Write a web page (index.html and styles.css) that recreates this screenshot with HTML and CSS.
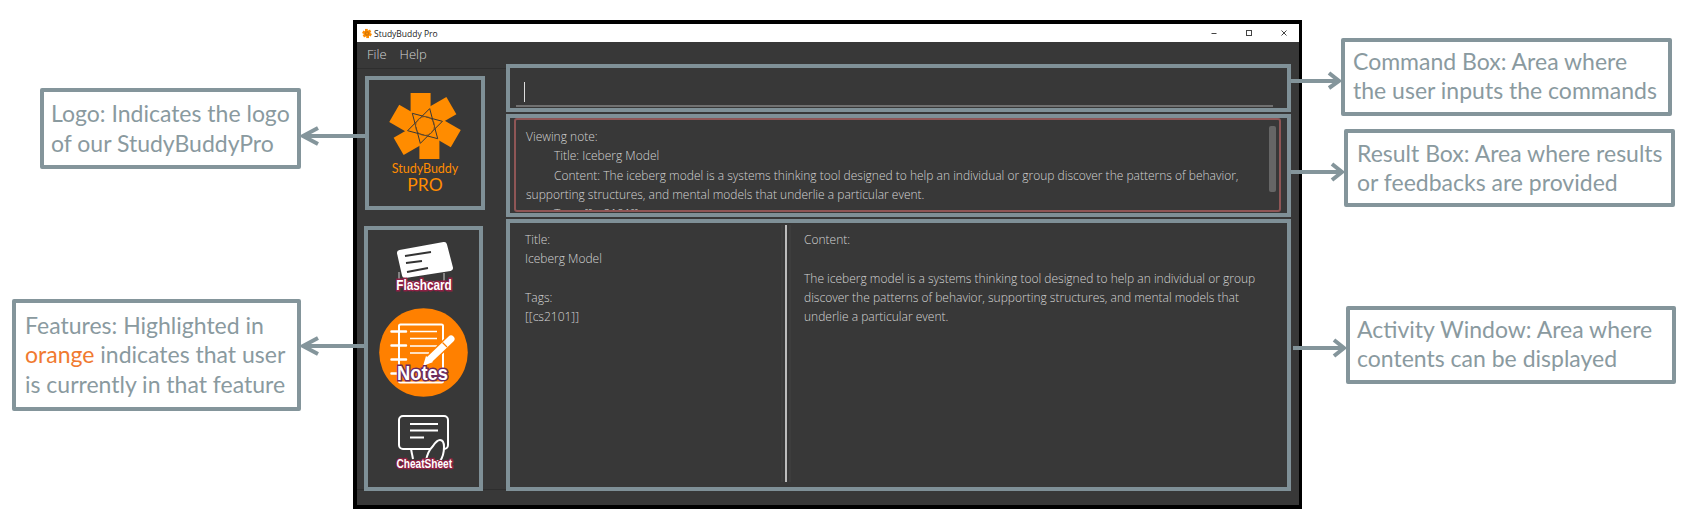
FILE: index.html
```html
<!DOCTYPE html>
<html lang="en">
<head>
<meta charset="utf-8">
<title>StudyBuddy Pro annotated</title>
<link rel="stylesheet" href="styles.css">
</head>
<body>
<svg class="defs" width="0" height="0" aria-hidden="true">
  <defs>
    <symbol id="logo" viewBox="-36 -36 72 72">
      <g fill="#ff8c00">
        <rect x="-14.4" y="-33" width="20" height="26"/>
        <rect x="-14.4" y="-33" width="20" height="26" transform="rotate(60)"/>
        <rect x="-14.4" y="-33" width="20" height="26" transform="rotate(120)"/>
        <rect x="-14.4" y="-33" width="20" height="26" transform="rotate(180)"/>
        <rect x="-14.4" y="-33" width="20" height="26" transform="rotate(240)"/>
        <rect x="-14.4" y="-33" width="20" height="26" transform="rotate(300)"/>
        <circle r="16"/>
      </g>
      <g fill="none" stroke="#383838" stroke-width="1">
        <path d="M4.7-17.4 L12.7 12.7 L-17.4 4.7 Z"/>
        <path d="M17.4-4.7 L-4.7 17.4 L-12.7-12.7 Z"/>
        <circle r="9.5" stroke-width=".8" stroke="#7a5020"/>
      </g>
      <path fill="#ff8c00" d="M0-9 L2-6 L6-7 L6-3 L9 0 L6 3 L6 7 L2 6 L0 9 L-2 6 L-6 7 L-6 3 L-9 0 L-6-3 L-6-7 L-2-6 Z"/>
    </symbol>
  </defs>
</svg>

<main class="window">
  <header class="titlebar">
    <svg class="title-icon"><use href="#logo"/></svg>
    <span class="title-text">StudyBuddy Pro</span>
    <div class="win-controls">
      <svg class="win-btn" viewBox="0 0 10 10"><path d="M2.5 5.5H7.5" stroke="#444" fill="none"/></svg>
      <svg class="win-btn" viewBox="0 0 10 10"><rect x="2.5" y="2.5" width="5" height="5" stroke="#444" fill="none"/></svg>
      <svg class="win-btn" viewBox="0 0 10 10"><path d="M2.5 2.5L7.5 7.5M7.5 2.5L2.5 7.5" stroke="#444" fill="none"/></svg>
    </div>
  </header>
  <nav class="menubar">
    <span class="menu-item">File</span>
    <span class="menu-item">Help</span>
  </nav>
  <div class="body">
    <aside class="sidebar">
      <section class="logo-box">
        <svg class="logo-mark"><use href="#logo"/></svg>
        <div class="logo-name">StudyBuddy</div>
        <div class="logo-pro">PRO</div>
      </section>
      <section class="nav-box">
        <div class="nav-item flash-item">
          <svg class="flash-icon" viewBox="0 0 60 52">
            <path d="M5 32V42H50V33" fill="none" stroke="#cfcfcf" stroke-width="1"/>
            <path d="M6 13 L50 5 L56 28 L11 35 Z" fill="#fff" stroke="#fff" stroke-width="6" stroke-linejoin="round"/>
            <path d="M11 16L37 12M12 23L28 21M13 32L34 28" stroke="#333" stroke-width="2" fill="none"/>
          </svg>
          <span class="nav-label flash-label">Flashcard</span>
        </div>
        <div class="nav-item notes-item">
          <svg class="notes-icon" viewBox="0 0 89 89">
            <circle cx="44.5" cy="44.5" r="44.3" fill="#ff8000"/>
            <rect x="20" y="16.5" width="44" height="58" rx="1.5" fill="none" stroke="#fff" stroke-width="2"/>
            <path d="M31 23.5H58M31 30.5H58M31 38H58M31 45H50" stroke="#fff" stroke-width="1.5" fill="none"/>
            <path d="M12.5 23.5H27M12.5 37.5H27M12.5 51.5H27M12.5 65.5H27" stroke="#fff" stroke-width="2.5" fill="none" stroke-linecap="round"/>
            <path d="M50 52L72 31" stroke="#ff8000" stroke-width="10" fill="none"/>
            <path d="M51 51L72 31" stroke="#fff" stroke-width="7" fill="none" stroke-linecap="round"/>
            <path d="M44 58L47 48L54 54Z" fill="#fff"/>
            <path d="M63.5 34.5L68 39" stroke="#ff8000" stroke-width="1.2" fill="none"/>
          </svg>
          <span class="nav-label notes-label">Notes</span>
        </div>
        <div class="nav-item cheat-item">
          <svg class="cheat-icon" viewBox="0 0 60 56">
            <rect x="5" y="1" width="49" height="33" rx="4" fill="none" stroke="#fff" stroke-width="2"/>
            <path d="M16 9H44M16 15.5H44M16 22.5H30" stroke="#fff" stroke-width="2" fill="none"/>
            <path d="M17 34L19 44" stroke="#fff" stroke-width="2" fill="none"/>
            <path d="M32 46C33 39 36 34 39 31C41 28 43 25 46 25C49 25 50 28 50 32C50 38 49 42 46 46Z" fill="#383838" stroke="#fff" stroke-width="2"/>
          </svg>
          <span class="nav-label cheat-label">CheatSheet</span>
        </div>
      </section>
    </aside>
    <div class="main">
      <section class="panel command">
        <div class="command-input"><span class="caret"></span></div>
      </section>
      <section class="panel result">
        <div class="result-inner">
          <p class="result-text">Viewing note:<br>
          <span class="tab"></span>Title: Iceberg Model<br>
          <span class="tab"></span>Content: The iceberg model is a systems thinking tool designed to help an individual or group discover the patterns of behavior,<br>
          supporting structures, and mental models that underlie a particular event.<br>
          <span class="tab"></span>Tags: [[cs2101]]</p>
          <div class="scrollbar"></div>
        </div>
      </section>
      <section class="panel activity">
        <div class="col col-left">Title:<br>Iceberg Model<br><br>Tags:<br>[[cs2101]]</div>
        <div class="splitter"></div>
        <div class="col col-right">Content:<br><br>The iceberg model is a systems thinking tool designed to help an individual or group<br>discover the patterns of behavior, supporting structures, and mental models that<br>underlie a particular event.</div>
      </section>
    </div>
  </div>
</main>

<div class="callout c-logo"><span>Logo: Indicates the logo</span><span>of our StudyBuddyPro</span></div>
<div class="callout c-features"><span>Features: Highlighted in</span><span><em>orange</em> indicates that user</span><span>is currently in that feature</span></div>
<div class="callout c-command"><span>Command Box: Area where</span><span>the user inputs the commands</span></div>
<div class="callout c-result"><span>Result Box: Area where results</span><span>or feedbacks are provided</span></div>
<div class="callout c-activity"><span>Activity Window: Area where</span><span>contents can be displayed</span></div>

<svg class="arrows" viewBox="0 0 1686 526" aria-hidden="true">
  <g fill="none" stroke="#84959b" stroke-width="4">
    <path d="M365 136H303M318 128L303 136L318 144"/>
    <path d="M364 346H303M318 338L303 346L318 354"/>
    <path d="M1291 81H1338M1329 73L1339 81L1329 88"/>
    <path d="M1291 172H1341M1332 164L1342 172L1332 180"/>
    <path d="M1293 348H1343M1334 340L1344 348L1334 356"/>
  </g>
</svg>
</body>
</html>
```
FILE: styles.css
```css
* { box-sizing: border-box; }
html, body { margin: 0; padding: 0; background: #fff; }
body { width: 1686px; height: 526px; position: relative; overflow: hidden; }
.defs { position: absolute; }

.window {
  margin: 20px 0 0 353px;
  width: 949px;
  height: 489px;
  border: 4px solid #000;
  border-right-width: 3px;
  background: #383838;
  display: flex;
  flex-direction: column;
  font-family: "Open Sans", "Liberation Sans", sans-serif;
  font-weight: 300;
  color: #d4d4d4;
}

.titlebar {
  height: 18px;
  background: #fff;
  display: flex;
  align-items: center;
  padding-left: 5px;
  color: #222;
  font-weight: 400;
}
.title-icon { width: 10px; height: 11px; }
.title-text { font-size: 8.5px; margin-left: 2px; }
.win-controls { margin-left: auto; display: flex; gap: 25px; padding-right: 10px; }
.win-btn { width: 10px; height: 10px; }

.menubar {
  height: 22px;
  display: flex;
  gap: 13px;
  padding: 2px 0 0 10px;
  font-size: 13px;
  line-height: 20px;
}

.body { display: flex; height: 427px; }

.sidebar {
  width: 149px;
  padding: 12px 0 0 8px;
  display: flex;
  flex-direction: column;
  gap: 16px;
  background:
    linear-gradient(#2e2e2e, #2e2e2e) 0 4px / 100% 1px no-repeat,
    linear-gradient(#2e2e2e, #2e2e2e) 0 425px / 100% 1px no-repeat;
}

.logo-box {
  width: 120px;
  height: 134px;
  border: 4px solid #7f9097;
  display: flex;
  flex-direction: column;
  align-items: center;
  padding-top: 10px;
  color: #ff8c00;
}
.logo-mark { width: 72px; height: 72px; flex: none; }
.logo-name { font-size: 12.5px; line-height: 14px; font-family: Lato, sans-serif; font-weight: 400; }
.logo-pro { font-size: 17.5px; line-height: 17px; font-family: Lato, sans-serif; font-weight: 400; }

.nav-box {
  width: 119px;
  height: 266px;
  margin-left: -1px;
  border: 4px solid #7f9097;
  display: flex;
  flex-direction: column;
  align-items: center;
  padding-top: 10px;
  gap: 16px;
}
.nav-item { position: relative; flex: none; }
.flash-item { width: 60px; height: 52px; }
.notes-item { width: 89px; height: 89px; }
.cheat-item { width: 60px; height: 56px; margin-top: 2px; }
.nav-item svg { display: block; width: 100%; height: 100%; }
.nav-label {
  position: absolute;
  left: 0;
  right: 0;
  text-align: center;
  font-family: "Liberation Sans", sans-serif;
  font-weight: 700;
  color: #fff;
  -webkit-text-stroke: 2.5px #8e1f44;
  paint-order: stroke fill;
}
.flash-label { top: 38px; font-size: 12px; line-height: 14px; transform: scale(.98, 1.15); }
.notes-label { top: 56px; font-size: 17px; line-height: 20px; -webkit-text-stroke-color: #6b2a5e; left: -2px; transform: scale(1.08, 1.2); }
.cheat-label { top: 42px; font-size: 11px; line-height: 14px; transform: scale(.92, 1.1); }

.main {
  width: 785px;
  display: flex;
  flex-direction: column;
  gap: 2px;
}
.panel { border: 4px solid #7f9097; }

.command { height: 48px; padding: 0 14px 1px 6px; display: flex; }
.command-input { flex: 1; border-bottom: 2px solid #707070; padding: 14px 0 0 8px; }
.caret { display: block; width: 1px; height: 20px; background: #ddd; }

.result { height: 103px; padding: 0 6px 1px 4px; display: flex; }
.result-inner {
  flex: 1;
  position: relative;
  border: 2px solid #8f5656;
  border-radius: 3px;
  overflow: hidden;
  padding: 7px 0 0 10px;
}
.result-text { margin: 0; font-size: 12px; line-height: 19.3px; white-space: nowrap; }
.tab { display: inline-block; width: 28px; }
.scrollbar {
  position: absolute;
  top: 6px;
  right: 3px;
  width: 7px;
  height: 66px;
  border-radius: 2px;
  background: #666;
}

.activity { height: 272px; display: flex; font-size: 12px; line-height: 19.3px; }
.col { white-space: nowrap; padding-top: 7px; }
.col-left { width: 275px; padding-left: 15px; }
.col-right { padding-left: 17px; }
.splitter {
  width: 2px;
  margin: 2px 0 5px;
  background: #bdbdbd;
  box-shadow: -4px 0 0 #3d3d3d, 4px 0 0 #3d3d3d;
}

.callout {
  position: absolute;
  border: 4px solid #84959b;
  border-radius: 2px;
  background: #fff;
  display: flex;
  flex-direction: column;
  justify-content: center;
  padding-left: 9px;
  font-family: Lato, sans-serif;
  font-size: 23px;
  line-height: 29.5px;
  color: #8a9a9f;
  white-space: nowrap;
}
.callout em { font-style: normal; color: #f07a30; }
.c-logo { left: 40px; top: 88px; width: 261px; height: 81px; padding-left: 7px; }
.c-features { left: 12px; top: 299px; width: 289px; height: 112px; }
.c-command { left: 1341px; top: 38px; width: 331px; height: 78px; padding-left: 8px; padding-bottom: 2px; }
.c-result { left: 1344px; top: 129px; width: 331px; height: 78px; }
.c-activity { left: 1346px; top: 306px; width: 330px; height: 78px; padding-left: 7px; padding-bottom: 2px; }

.arrows { position: absolute; left: 0; top: 0; width: 1686px; height: 526px; pointer-events: none; }
```
